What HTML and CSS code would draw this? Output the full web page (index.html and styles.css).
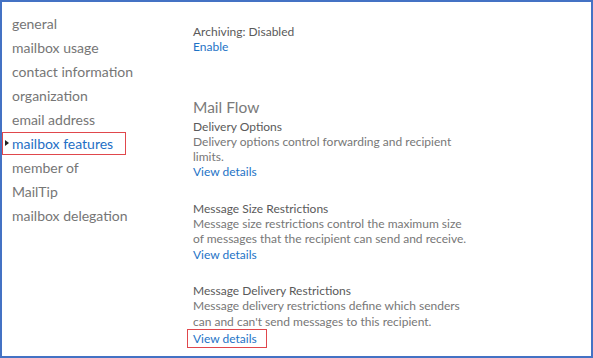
FILE: index.html
```html
<!DOCTYPE html>
<html lang="en">
<head>
    <meta charset="UTF-8">
    <title>mailbox features</title>
    <link rel="stylesheet" href="styles.css">
</head>
<body>
    <div class="frame">
        <ul class="nav">
            <li>general</li>
            <li>mailbox usage</li>
            <li>contact information</li>
            <li>organization</li>
            <li>email address</li>
            <li class="active">mailbox features</li>
            <li>member of</li>
            <li>MailTip</li>
            <li>mailbox delegation</li>
        </ul>

        <div class="content">
            <div class="block">
                <div class="label">Archiving: Disabled</div>
                <a class="link">Enable</a>
            </div>

            <h2>Mail Flow</h2>

            <div class="block">
                <div class="label">Delivery Options</div>
                <p>Delivery options control forwarding and recipient<br>limits.</p>
                <a class="link">View details</a>
            </div>

            <div class="block">
                <div class="label">Message Size Restrictions</div>
                <p>Message size restrictions control the maximum size<br>of messages that the recipient can send and receive.</p>
                <a class="link">View details</a>
            </div>

            <div class="block">
                <div class="label">Message Delivery Restrictions</div>
                <p>Message delivery restrictions define which senders<br>can and can't send messages to this recipient.</p>
                <a class="link marked">View details</a>
            </div>
        </div>
    </div>
</body>
</html>
```

FILE: styles.css
```css
html, body {
    margin: 0;
    padding: 0;
    background-color: #fff;
}

body {
    font-family: Lato, "Open Sans", sans-serif;
    color: #666;
}

.frame {
    box-sizing: border-box;
    width: 593px;
    height: 358px;
    border: 2px solid #4472c4;
    display: flex;
    overflow: hidden;
}

.nav {
    list-style: none;
    margin: 0;
    padding: 10px 0 0 0;
    width: 191px;
    flex-shrink: 0;
}

.nav li {
    font-size: 14px;
    line-height: 24px;
    padding-left: 10px;
    color: #767676;
}

.nav li.active {
    position: relative;
    color: #1f6fc5;
    display: inline-block;
    border: 1.5px solid #e0474c;
    padding: 0 12px 0 9px;
    line-height: 21px;
    margin: 0 0 1px 0;
}

.nav li.active::before {
    content: "";
    position: absolute;
    left: 2px;
    top: 7px;
    border-left: 4px solid #222;
    border-top: 3.5px solid transparent;
    border-bottom: 3.5px solid transparent;
}

.content {
    padding-top: 22px;
    font-size: 12px;
    line-height: 15.3px;
}

.block {
    margin-bottom: 21px;
}

.label {
    color: #5a5a5a;
}

.content p {
    margin: 0;
    color: #777;
}

.content h2 {
    font-weight: normal;
    font-size: 15.5px;
    color: #7a7a7a;
    margin: 42px 0 2px 0;
    line-height: 20px;
}

.link {
    color: #1e73c6;
    display: inline-block;
}

.link.marked {
    border: 1.5px solid #e0474c;
    margin-left: -6px;
    padding: 1px 9px 1px 5px;
}
```
